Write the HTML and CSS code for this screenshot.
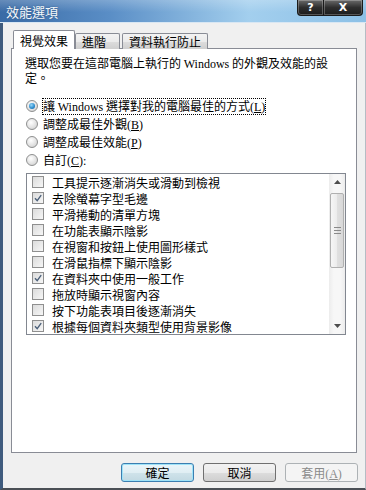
FILE: index.html
```html
<!DOCTYPE html>
<html lang="zh-Hant">

<head>
    <meta charset="UTF-8">
    <meta name="viewport" content="width=device-width, initial-scale=1.0">
    <title>效能選項</title>
    <link rel="stylesheet" href="styles.css">
</head>

<body>
    <div class="window">
        <div class="titlebar">
            <span class="title">效能選項</span>
            <div class="caption-btns">
                <span class="cap-btn help">?</span>
                <span class="cap-btn close">X</span>
            </div>
        </div>

        <div class="frame">
            <div class="tabs">
                <div class="tab active">視覺效果</div>
                <div class="tab tab-adv">進階</div>
                <div class="tab">資料執行防止</div>
            </div>

            <div class="panel">
                <p class="intro">選取您要在這部電腦上執行的 <span class="latin">Windows</span> 的外觀及效能的設定。</p>

                <div class="radios">
                    <div class="radio checked">
                        <span class="dot"></span>
                        <span class="focus">讓 <span class="latin">Windows</span> 選擇對我的電腦最佳的方式<span class="latin">(<u>L</u>)</span></span>
                    </div>
                    <div class="radio">
                        <span class="dot"></span>
                        <span>調整成最佳外觀<span class="latin">(<u>B</u>)</span></span>
                    </div>
                    <div class="radio">
                        <span class="dot"></span>
                        <span>調整成最佳效能<span class="latin">(<u>P</u>)</span></span>
                    </div>
                    <div class="radio">
                        <span class="dot"></span>
                        <span>自訂<span class="latin">(<u>C</u>):</span></span>
                    </div>
                </div>

                <div class="listbox">
                    <ul class="items">
                        <li><span class="check"></span>工具提示逐漸消失或滑動到檢視</li>
                        <li><span class="check on"><svg viewBox="0 0 10 10"><path d="M2 5.2 L4.2 7.6 L8.2 2.2" /></svg></span>去除螢幕字型毛邊</li>
                        <li><span class="check"></span>平滑捲動的清單方塊</li>
                        <li><span class="check"></span>在功能表顯示陰影</li>
                        <li><span class="check"></span>在視窗和按鈕上使用圖形樣式</li>
                        <li><span class="check"></span>在滑鼠指標下顯示陰影</li>
                        <li><span class="check on"><svg viewBox="0 0 10 10"><path d="M2 5.2 L4.2 7.6 L8.2 2.2" /></svg></span>在資料夾中使用一般工作</li>
                        <li><span class="check"></span>拖放時顯示視窗內容</li>
                        <li><span class="check"></span>按下功能表項目後逐漸消失</li>
                        <li><span class="check on"><svg viewBox="0 0 10 10"><path d="M2 5.2 L4.2 7.6 L8.2 2.2" /></svg></span>根據每個資料夾類型使用背景影像</li>
                    </ul>
                    <div class="scrollbar">
                        <div class="arrow"><svg viewBox="0 0 7 4"><path d="M0 4 L3.5 0 L7 4 Z" /></svg></div>
                        <div class="track">
                            <div class="thumb">
                                <span class="grip"></span>
                            </div>
                        </div>
                        <div class="arrow"><svg viewBox="0 0 7 4"><path d="M0 0 L7 0 L3.5 4 Z" /></svg></div>
                    </div>
                </div>
            </div>

            <div class="buttons">
                <button class="btn default">確定</button>
                <button class="btn">取消</button>
                <button class="btn disabled">套用<span class="latin">(<u>A</u>)</span></button>
            </div>
        </div>
    </div>
</body>

</html>
```

FILE: styles.css
```css
body {
    margin: 0;
    background-color: #f0f0f0;
    font-family: "Noto Sans CJK TC", "Noto Sans CJK SC", sans-serif;
    font-size: 12px;
    color: #000000;
}

.latin {
    font-family: "Liberation Serif", serif;
}

.window {
    width: 366px;
    height: 490px;
    display: flex;
    flex-direction: column;
    overflow: hidden;
}

/* title bar */
.titlebar {
    height: 22px;
    flex-shrink: 0;
    display: flex;
    align-items: flex-start;
    background:
        linear-gradient(to bottom, rgba(255, 255, 255, 0.22), rgba(255, 255, 255, 0) 55%),
        linear-gradient(to right, #3a6ba6 0%, #5a8ec6 30%, #a3cfee 68%, #8cc0e6 100%);
    border-bottom: 1px solid #d9e7f3;
}

.title {
    padding-left: 6px;
    line-height: 24px;
    font-size: 13px;
    color: #f4f8fc;
    text-shadow: 0 0 2px #2d5580;
}

.caption-btns {
    margin-left: auto;
    margin-right: 3px;
    display: flex;
}

.cap-btn {
    height: 15px;
    display: flex;
    align-items: center;
    justify-content: center;
    color: #ffffff;
    font-family: "DejaVu Sans", sans-serif;
    font-weight: bold;
    font-size: 11px;
    background: linear-gradient(to bottom, #6a6a6a, #2e2e2e 50%, #1c1c1c);
    border: 1px solid #1a1a1a;
    border-top: none;
    box-shadow: inset 0 0 0 1px rgba(255, 255, 255, 0.25);
}

.cap-btn.help {
    width: 25px;
    border-radius: 0 0 0 4px;
}

.cap-btn.close {
    width: 38px;
    border-left: none;
    border-radius: 0 0 4px 0;
}

/* window body */
.frame {
    flex: 1;
    display: flex;
    flex-direction: column;
    padding: 8px 8px 6px 8px;
    border-left: 3px solid #3f5b7d;
    border-right: 1px solid #b5bcc4;
    border-bottom: 2px solid #4a4f55;
    min-height: 0;
}

.tabs {
    height: 18px;
    display: flex;
    align-items: flex-end;
    padding-left: 2px;
    position: relative;
    z-index: 1;
}

.tab {
    height: 15px;
    line-height: 15px;
    padding: 0 6px;
    border: 1px solid #898c95;
    border-bottom: none;
    border-radius: 2px 2px 0 0;
    background: linear-gradient(to bottom, #f3f3f3, #ebebeb 50%, #dddddd 51%, #cfcfcf);
    margin-right: 2px;
}

.tab.active {
    height: 18px;
    line-height: 19px;
    background: #ffffff;
    margin-right: 0;
}

.tab.tab-adv {
    padding-right: 13px;
}

.panel {
    flex: 1;
    margin-top: -1px;
    background-color: #ffffff;
    border: 1px solid #898c95;
    padding: 7px 12px 0 13px;
    min-height: 0;
}

.intro {
    margin: 0;
    width: 312px;
    line-height: 14px;
}

.radios {
    margin-top: 12px;
}

.radio {
    height: 18px;
    display: flex;
    align-items: center;
}

.dot {
    width: 10px;
    height: 10px;
    margin-left: 1px;
    margin-right: 5px;
    border: 1px solid #8e8f8f;
    border-radius: 50%;
    background: radial-gradient(circle at 40% 35%, #ffffff, #e0e0e0 60%, #c8c8c8);
    position: relative;
}

.radio.checked .dot::after {
    content: "";
    position: absolute;
    left: 2px;
    top: 2px;
    width: 6px;
    height: 6px;
    border-radius: 50%;
    background: radial-gradient(circle at 40% 35%, #9ad8f8, #2f8fd0 55%, #0d5a9a);
}

.focus {
    outline: 1px dotted #000000;
    outline-offset: 0;
    line-height: 14px;
}

/* list box */
.listbox {
    margin-top: 4px;
    margin-left: 1px;
    width: 318px;
    height: 160px;
    border: 1px solid #828790;
    display: flex;
}

.items {
    list-style: none;
    margin: 0;
    padding: 0;
    flex: 1;
}

.items li {
    height: 16px;
    display: flex;
    align-items: center;
    padding-left: 5px;
}

.check {
    width: 10px;
    height: 10px;
    margin-right: 8px;
    border: 1px solid #8f8f8f;
    background: linear-gradient(135deg, #dcdcdc, #f6f6f6);
    display: flex;
}

.check svg {
    width: 10px;
    height: 10px;
}

.check path {
    fill: none;
    stroke: #4c607a;
    stroke-width: 1.4;
}

.scrollbar {
    width: 16px;
    display: flex;
    flex-direction: column;
    background: linear-gradient(to right, #ececec, #f7f7f7 30%, #f7f7f7 70%, #ececec);
}

.arrow {
    height: 16px;
    display: flex;
    align-items: center;
    justify-content: center;
}

.arrow svg {
    width: 7px;
    height: 4px;
}

.arrow path {
    fill: #4d4d4d;
}

.track {
    flex: 1;
    padding-top: 3px;
}

.thumb {
    height: 73px;
    margin: 0 1px;
    border: 1px solid #b0b0b0;
    border-radius: 2px;
    background: linear-gradient(to right, #f6f6f6, #ececec 50%, #e0e0e0 51%, #d8d8d8);
    display: flex;
    align-items: center;
    justify-content: center;
}

.grip {
    width: 7px;
    height: 7px;
    background: repeating-linear-gradient(to bottom, #8a8a8a 0 1px, transparent 1px 3px);
}

/* bottom buttons */
.buttons {
    margin-top: 10px;
    display: flex;
    justify-content: flex-end;
    gap: 9px;
    margin-right: -1px;
}

.btn {
    width: 73px;
    height: 19px;
    padding: 0;
    font-family: "Noto Sans CJK TC", sans-serif;
    font-size: 12px;
    color: #000000;
    border: 1px solid #707070;
    border-radius: 3px;
    background: linear-gradient(to bottom, #f2f2f2, #ebebeb 50%, #dddddd 51%, #cfcfcf);
}

.btn.default {
    border-color: #3c7fb1;
    box-shadow: inset 0 0 0 1px #9fe3f8;
    background: linear-gradient(to bottom, #eaf6fa, #e0eef3 50%, #cfe3ea 51%, #c2d9e2);
}

.btn.disabled {
    color: #8b8b8b;
    border-color: #adb2b5;
    background: #f4f4f4;
}
```
